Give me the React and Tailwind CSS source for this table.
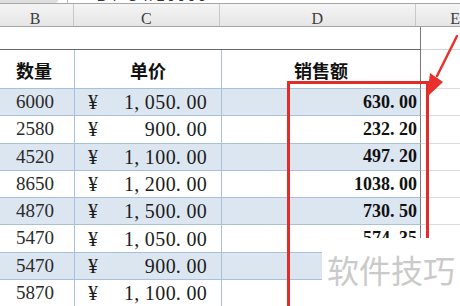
const rows = [
  { q: '6000', p: '1,050.00', s: '630.00' },
  { q: '2580', p: '900.00', s: '232.20' },
  { q: '4520', p: '1,100.00', s: '497.20' },
  { q: '8650', p: '1,200.00', s: '1038.00' },
  { q: '4870', p: '1,500.00', s: '730.50' },
  { q: '5470', p: '1,050.00', s: '574.35' },
  { q: '5470', p: '900.00', s: '' },
  { q: '5870', p: '1,100.00', s: '' },
]

// SimSun-like fixed cells: every char, dot and comma included, gets one slot
function Slots({ text, cell }) {
  return text.split('').map((ch, i) => (
    <span key={i} className={`inline-block ${cell} ${ch === '.' || ch === ',' ? 'text-left' : 'text-center'}`}>
      {ch}
    </span>
  ))
}

function ColHeader() {
  return (
    <div className="flex h-[23px] bg-gradient-to-b from-[#f4f4f4] to-[#e6e6e6] border-b border-[#a3a3a3] text-[16px] text-[#3c3c3c] font-['Liberation_Serif',serif]">
      <div className="w-[75px] border-r border-[#c8c8c8] flex justify-center pt-[3px] pr-[3px]">B</div>
      <div className="w-[147px] border-r border-[#c8c8c8] flex justify-center pt-[3px]">C</div>
      <div className="w-[199px] border-r border-[#c8c8c8] flex justify-center pt-[3px]">D</div>
      <div className="flex-1 flex justify-start pl-[34px] pt-[3px]">E</div>
    </div>
  )
}

function DataRow({ row, blue }) {
  const bg = blue ? 'bg-[#dce6f1]' : 'bg-white'
  return (
    <div className="flex h-[27.3px] text-[#1c1c1c] font-['Liberation_Serif',serif]">
      <div className={`w-[75px] ${bg} border-r border-b border-[#a9c0dc] flex items-center justify-center pr-[4px] text-[19px] text-[#2a2a2a]`}>
        {row.q}
      </div>
      <div className={`w-[147px] ${bg} border-r border-b border-[#a9c0dc] flex items-center pl-[13px] pr-[14px] text-[20px]`}>
        <span>¥</span>
        <span className="ml-auto">
          <Slots text={row.p} cell="w-[10.4px]" />
        </span>
      </div>
      <div className={`w-[199px] ${bg} border-r border-r-[#7a7a7a] border-b border-b-[#a9c0dc] flex items-center justify-end pr-[3px] text-[18px] font-bold text-[#111]`}>
        <Slots text={row.s} cell="w-[9px]" />
      </div>
      <div className="flex-1 bg-white border-b border-[#dcdcdc]" />
    </div>
  )
}

export default function App() {
  return (
    <div className="relative w-[460px] h-[306px] overflow-hidden bg-white">
      {/* leftover of the formula bar */}
      <div className="flex h-[4px] border-b border-[#a8a8a8]">
        <div className="w-[58px] bg-[#dedede] rounded-br-[6px]" />
        <div className="w-[10px] border-r border-[#bdbdbd]" />
        <div className="flex-1 overflow-hidden pl-[18px]">
          <div className="mt-[-12px] leading-[15px] text-[15px] text-[#333] font-['Liberation_Sans',sans-serif] tracking-[2px]">
            =B4*C4/10000
          </div>
        </div>
      </div>

      <ColHeader />

      {/* blank row */}
      <div className="flex h-[23px]">
        <div className="w-[421px] border-r border-r-[#7a7a7a] border-b border-b-[#666]" />
        <div className="flex-1 border-b border-[#d4d4d4]" />
      </div>

      {/* title row */}
      <div className="flex h-[39px] text-[18px] font-bold text-[#111] font-['Noto_Sans_CJK_SC',sans-serif]">
        <div className="w-[75px] border-r border-b border-[#a9c0dc] flex items-center justify-center pt-[3px] pr-[6px]">数量</div>
        <div className="w-[147px] border-r border-b border-[#a9c0dc] flex items-center justify-center pt-[3px]">单价</div>
        <div className="w-[199px] border-r border-r-[#7a7a7a] border-b border-b-[#a9c0dc] flex items-center justify-center pt-[3px]">销售额</div>
        <div className="flex-1 border-b border-[#dcdcdc]" />
      </div>

      {rows.map((row, i) => (
        <DataRow key={i} row={row} blue={i % 2 === 0} />
      ))}

      {/* red highlight box */}
      <div className="absolute left-[287px] top-[81px] w-[142px] h-[260px] border-[3px] border-[#e02d2a]" />

      {/* red arrow */}
      <svg className="absolute left-[420px] top-[30px]" width="40" height="70" viewBox="0 0 40 70">
        <line x1="37" y1="6" x2="17" y2="46" stroke="#e8302c" strokeWidth="2.5" strokeLinecap="round" />
        <polygon points="7,67 10,43 23,52" fill="#e8302c" />
      </svg>

      {/* watermark */}
      <div className="absolute left-[322px] top-[238px] right-0 bottom-0 bg-white">
        <div className="pl-[5px] mt-[12px] text-[32px] leading-[38px] text-[#cacaca] font-['Noto_Sans_CJK_SC',sans-serif] whitespace-nowrap">
          软件技巧
        </div>
      </div>
    </div>
  )
}
